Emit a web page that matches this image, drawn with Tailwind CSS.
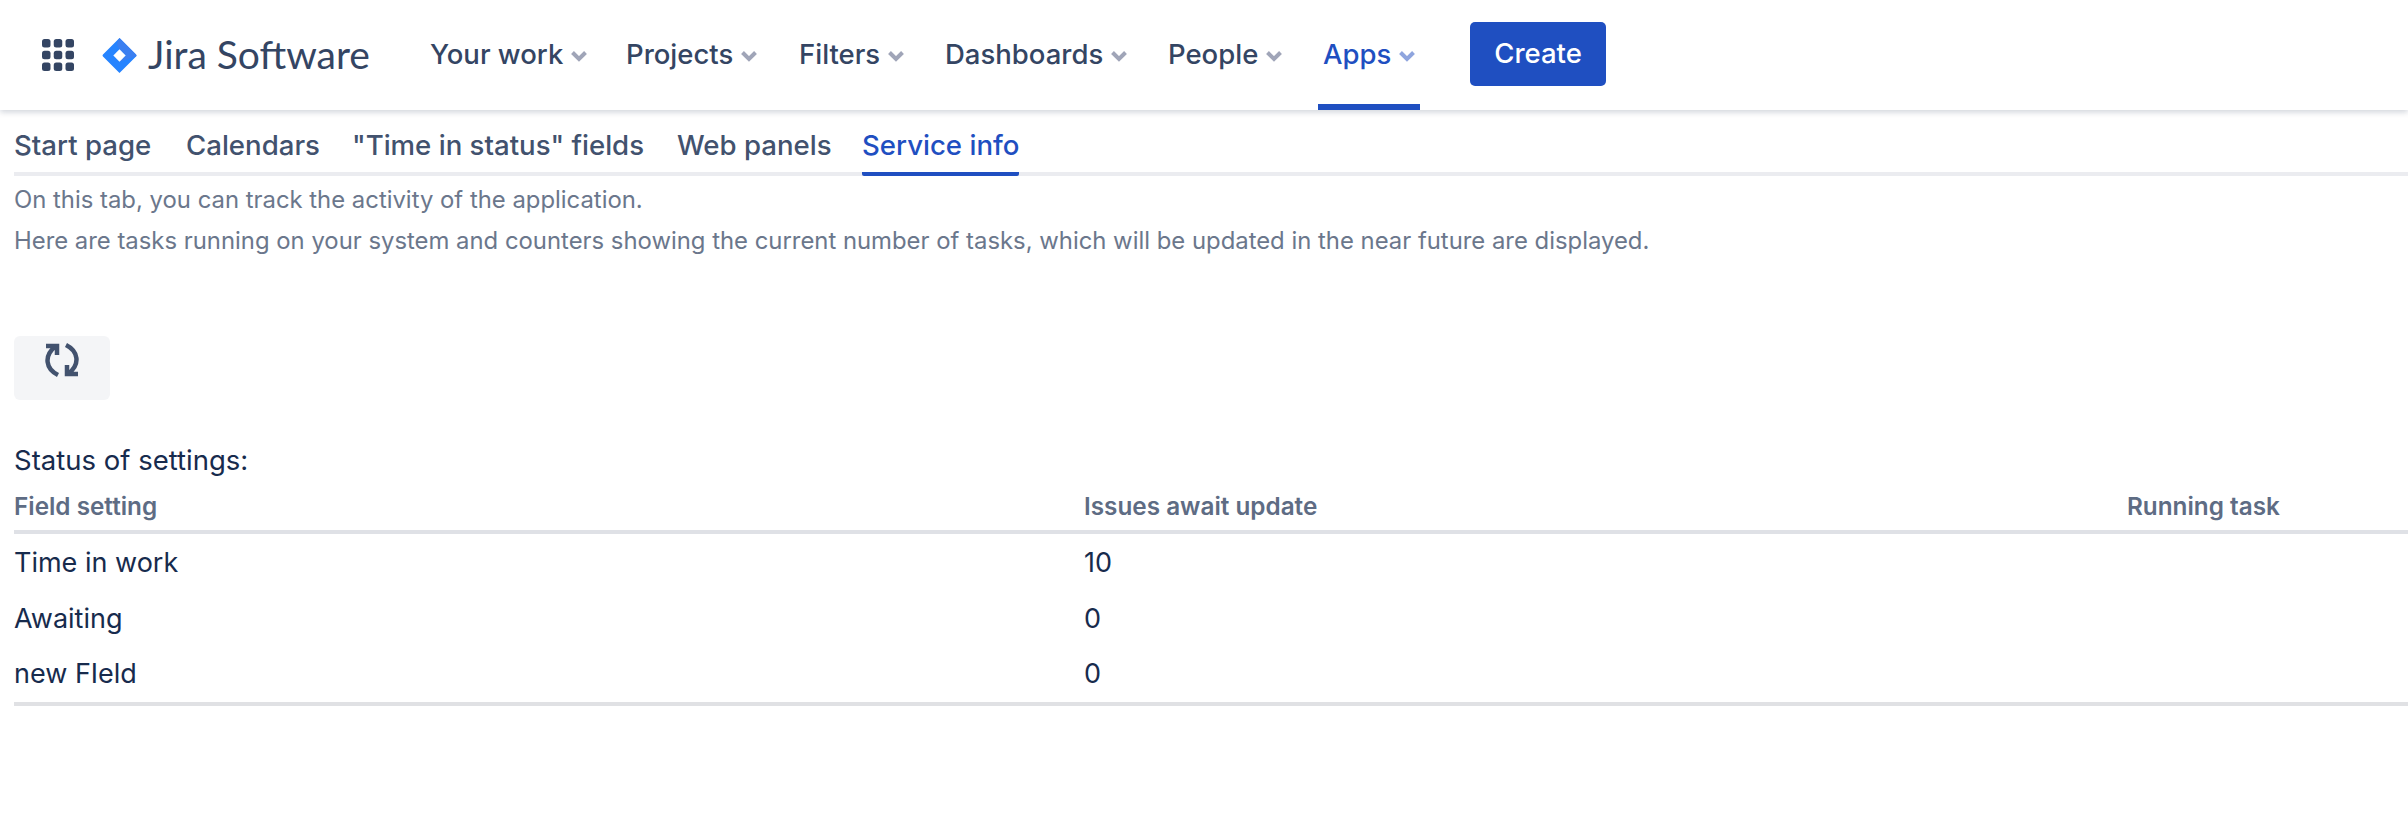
<!DOCTYPE html>
<html><head><meta charset="utf-8"><script src="https://cdn.jsdelivr.net/npm/@tailwindcss/browser@4"></script></head>
<body class="bg-white font-['Inter',sans-serif] overflow-hidden">
<div class="w-[2408px] h-[814px] overflow-hidden">
<header class="h-[110px] flex items-center pl-[42px] bg-white shadow-[0_2px_6px_rgba(9,30,66,0.2)] relative z-10 text-[#344563] text-[27.500px] font-medium">
  <svg class="w-[32px] h-[32px] shrink-0" viewBox="0 0 32 32" fill="#344563"><rect x="0" y="0" width="8.500" height="8.500" rx="2.500"/><rect x="11.750" y="0" width="8.500" height="8.500" rx="2.500"/><rect x="23.500" y="0" width="8.500" height="8.500" rx="2.500"/><rect x="0" y="11.750" width="8.500" height="8.500" rx="2.500"/><rect x="11.750" y="11.750" width="8.500" height="8.500" rx="2.500"/><rect x="23.500" y="11.750" width="8.500" height="8.500" rx="2.500"/><rect x="0" y="23.500" width="8.500" height="8.500" rx="2.500"/><rect x="11.750" y="23.500" width="8.500" height="8.500" rx="2.500"/><rect x="23.500" y="23.500" width="8.500" height="8.500" rx="2.500"/></svg>
  <svg class="w-[35px] h-[35px] ml-[28px] shrink-0" viewBox="0 0 36 36"><path d="M18 0 L35 17 Q36 18 35 19 L18 36 L1 19 Q0 18 1 17 Z" fill="#2684ff"/><path d="M18 0 Q13 6 18 11.500 L24.500 18 L18 24.500 L35 19 Q36 18 35 17 Z" fill="#3b7ff0"/><rect x="13.500" y="13.500" width="9" height="9" transform="rotate(45 18 18)" fill="#fff"/></svg>
  <span class="ml-[11px] mb-[2px] w-[282px] font-['Lato',sans-serif] font-normal text-[39px] leading-none text-[#344563] whitespace-nowrap">Jira Software</span>
  <nav class="flex items-stretch h-full">
    <a class="w-[196px] flex items-center gap-[7px]">Your work<svg class="w-[18px] h-[12px] mt-[2px]" viewBox="0 0 18 12"><path d="M2.500 2.500 L9 9 L15.500 2.500" fill="none" stroke="#a0a5b8" stroke-width="4"/></svg></a>
    <a class="w-[173px] flex items-center gap-[7px]">Projects<svg class="w-[18px] h-[12px] mt-[2px]" viewBox="0 0 18 12"><path d="M2.500 2.500 L9 9 L15.500 2.500" fill="none" stroke="#a0a5b8" stroke-width="4"/></svg></a>
    <a class="w-[146px] flex items-center gap-[7px]">Filters<svg class="w-[18px] h-[12px] mt-[2px]" viewBox="0 0 18 12"><path d="M2.500 2.500 L9 9 L15.500 2.500" fill="none" stroke="#a0a5b8" stroke-width="4"/></svg></a>
    <a class="w-[223px] flex items-center gap-[7px]">Dashboards<svg class="w-[18px] h-[12px] mt-[2px]" viewBox="0 0 18 12"><path d="M2.500 2.500 L9 9 L15.500 2.500" fill="none" stroke="#a0a5b8" stroke-width="4"/></svg></a>
    <a class="w-[150px] flex items-center gap-[7px]">People<svg class="w-[18px] h-[12px] mt-[2px]" viewBox="0 0 18 12"><path d="M2.500 2.500 L9 9 L15.500 2.500" fill="none" stroke="#a0a5b8" stroke-width="4"/></svg></a>
    <a class="w-[102px] pl-[5px] flex items-center gap-[7px] text-[#1f4fc1] border-b-[6px] border-[#1f4fc1] rounded-t-[3px] pt-[6px]">Apps<svg class="w-[18px] h-[12px] mt-[2px]" viewBox="0 0 18 12"><path d="M2.500 2.500 L9 9 L15.500 2.500" fill="none" stroke="#8fa5de" stroke-width="4"/></svg></a>
  </nav>
  <button class="ml-[50px] mb-[2px] w-[136px] h-[64px] bg-[#1f4fc1] text-white rounded-[5px] font-medium text-[27.500px]">Create</button>
</header>
<main class="pl-[14px] text-[#172b4d]">
  <nav class="h-[66px] flex items-start border-b-[4px] border-[#ebecf0] text-[27.600px] font-medium text-[#42526e]">
    <a class="flex items-center h-[66px] pt-[6px] w-[172px]">Start page</a>
    <a class="flex items-center h-[66px] pt-[6px] w-[166px]">Calendars</a>
    <a class="flex items-center h-[66px] pt-[6px] w-[325px]">"Time in status" fields</a>
    <a class="flex items-center h-[66px] pt-[6px] w-[185px]">Web panels</a>
    <a class="flex items-center h-[66px] pt-[10px] text-[#1f4fc1] border-b-[4px] border-[#1f4fc1] rounded-b-[2px]">Service info</a>
  </nav>
  <div class="mt-[4px] text-[#6b778c] text-[23.870px] leading-[40.500px]">
    <p>On this tab, you can track the activity of the application.</p>
    <p>Here are tasks running on your system and counters showing the current number of tasks, which will be updated in the near future are displayed.</p>
  </div>
  <button class="mt-[75px] w-[96px] h-[64px] bg-[#f4f5f7] rounded-[6px] flex items-start justify-center pt-[7px]">
    <svg class="w-[34px] h-[34px]" viewBox="0 0 34 34" fill="none" stroke="#42526e" stroke-width="4.500"><path d="M13 32 C1 26 -2 13 11 3"/><path d="M1 3 H12 V12"/><path d="M21 2 C33 8 36 21 23 31"/><path d="M33 31 H22 V22"/></svg>
  </button>
  <p class="mt-[43px] text-[27.500px] leading-[34px]">Status of settings:</p>
  <div class="grid grid-cols-[1070px_1043px_1fr] items-center h-[57px] border-b-[4px] border-[#dfe1e6] text-[24.300px] font-semibold text-[#5e6c84] pt-[5px]">
    <div>Field setting</div><div>Issues await update</div><div>Running task</div>
  </div>
  <div class="grid grid-cols-[1070px_1043px_1fr] items-center h-[56px] text-[27px] mt-[1px]"><div>Time in work</div><div>10</div><div></div></div>
  <div class="grid grid-cols-[1070px_1043px_1fr] items-center h-[56px] text-[27px]"><div>Awaiting</div><div>0</div><div></div></div>
  <div class="grid grid-cols-[1070px_1043px_1fr] items-center h-[55px] text-[27px]"><div>new FIeld</div><div>0</div><div></div></div>
  <div class="h-[4px] bg-[#e0e1e4]"></div>
</main>
</div>
</body></html>
